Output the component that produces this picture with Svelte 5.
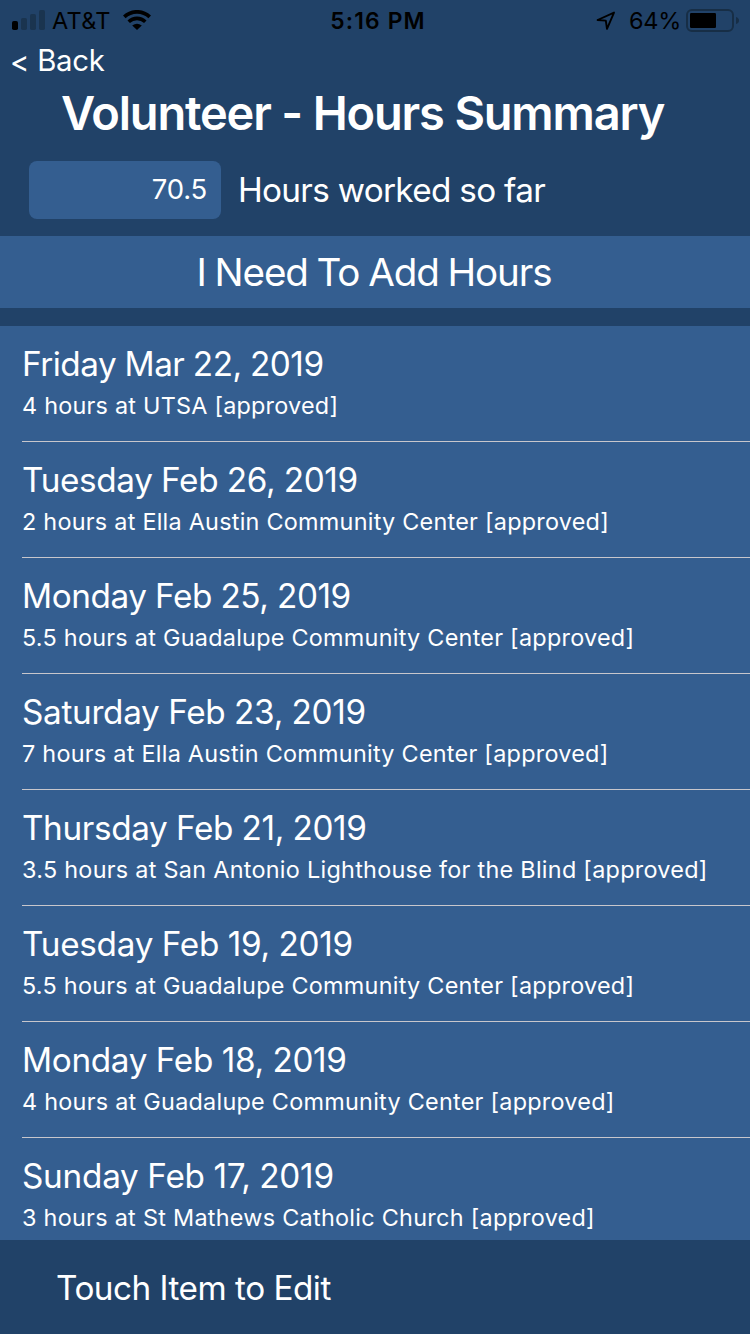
<script>
  // tracking: letter spacing in px for the date line and the detail line
  const entries = [
    { date: 'Friday Mar 22, 2019', detail: '4 hours at UTSA [approved]', tracking: [-0.5, 0.23] },
    { date: 'Tuesday Feb 26, 2019', detail: '2 hours at Ella Austin Community Center [approved]', tracking: [-0.36, 0.25] },
    { date: 'Monday Feb 25, 2019', detail: '5.5 hours at Guadalupe Community Center [approved]', tracking: [-0.42, 0.26] },
    { date: 'Saturday Feb 23, 2019', detail: '7 hours at Ella Austin Community Center [approved]', tracking: [-0.3, 0.26] },
    { date: 'Thursday Feb 21, 2019', detail: '3.5 hours at San Antonio Lighthouse for the Blind [approved]', tracking: [-0.37, 0.28] },
    { date: 'Tuesday Feb 19, 2019', detail: '5.5 hours at Guadalupe Community Center [approved]', tracking: [-0.28, 0.26] },
    { date: 'Monday Feb 18, 2019', detail: '4 hours at Guadalupe Community Center [approved]', tracking: [-0.31, 0.26] },
    { date: 'Sunday Feb 17, 2019', detail: '3 hours at St Mathews Catholic Church [approved]', tracking: [-0.24, 0.28] }
  ];
</script>

<div class="screen">
  <header class="status">
    <div class="left">
      <svg class="signal" width="34" height="20" viewBox="0 0 34 20">
        <rect x="0" y="11" width="6" height="9" rx="1.8" fill="#000" />
        <rect x="9" y="8" width="6" height="12" rx="1.8" fill="#1a344f" />
        <rect x="18" y="4" width="6" height="16" rx="1.8" fill="#1a344f" />
        <rect x="27" y="0" width="6" height="20" rx="1.8" fill="#1a344f" />
      </svg>
      <span class="carrier">AT&amp;T</span>
      <svg class="wifi" width="28" height="20" viewBox="0 0 28 20">
        <path d="M1.3 6.9 C8.4 0.1 19.6 0.1 26.7 6.9" fill="none" stroke="#000" stroke-width="3.7" />
        <path d="M5.7 11.7 C10.4 7.3 17.6 7.3 22.3 11.7" fill="none" stroke="#000" stroke-width="3.6" />
        <path d="M9.2 15.6 Q14 11.9 18.8 15.6 L14 20 Z" fill="#000" />
      </svg>
    </div>
    <span class="time">5:16 PM</span>
    <div class="right">
      <svg class="arrow" width="20" height="20" viewBox="0 0 20 20">
        <path d="M1.6 9 L18 1.6 L11 17.8 L9.8 9.6 Z" fill="none" stroke="#000" stroke-width="1.9" stroke-linejoin="round" />
      </svg>
      <span class="percent">64%</span>
      <svg class="battery" width="54" height="24" viewBox="0 0 54 24">
        <rect x="1" y="1" width="46" height="21" rx="5" fill="none" stroke="#172e46" stroke-width="2" />
        <rect x="4" y="4" width="26" height="15" rx="1.2" fill="#000" />
        <path d="M50 8 Q53 9 53 11.5 Q53 14 50 15 Z" fill="#172e46" />
      </svg>
    </div>
  </header>

  <nav><a class="back" href="#back"><span class="chevron">&lt;</span> Back</a></nav>
  <h1>Volunteer - Hours Summary</h1>
  <div class="total">
    <div class="field">70.5</div>
    <span class="label">Hours worked so far</span>
  </div>
  <button>I Need To Add Hours</button>

  <ul>
    {#each entries as { date, detail, tracking }}
      <li>
        <div class="date" style:letter-spacing="{tracking[0]}px">{date}</div>
        <div class="detail" style:letter-spacing="{tracking[1]}px">{detail}</div>
      </li>
    {/each}
  </ul>

  <footer>Touch Item to Edit</footer>
</div>

<style>
  :global(body) { margin: 0; background: #214268; }
  .screen {
    width: 750px;
    height: 1334px;
    display: flex;
    flex-direction: column;
    overflow: hidden;
    background: #214268;
    color: #fff;
    font-family: Inter, 'Liberation Sans', sans-serif;
    white-space: nowrap;
  }
  .status {
    display: grid;
    grid-template-columns: 1fr auto 1fr;
    height: 40px;
    flex: none;
    color: #000;
    font-size: 23.5px;
    line-height: 41px;
  }
  .left, .right { display: flex; align-items: flex-start; }
  .left { padding-left: 12px; }
  .right { justify-content: flex-end; padding-right: 10px; }
  .signal { margin-top: 10px; }
  .carrier { margin-left: 6px; width: 59px; letter-spacing: 0.3px; }
  .wifi { margin: 10px 0 0 12px; }
  .time {
    padding-left: 6px;
    font-weight: 600;
    font-size: 22.8px;
    line-height: 42px;
    letter-spacing: 1.15px;
  }
  .arrow { margin-top: 11px; margin-right: 13px; }
  .percent { width: 50px; margin-right: 7px; letter-spacing: -0.2px; }
  .battery { margin-top: 9px; }
  nav { height: 43px; flex: none; padding-left: 10px; }
  .back {
    color: inherit;
    text-decoration: none;
    font-size: 29.3px;
    line-height: 41px;
    letter-spacing: -0.25px;
  }
  .chevron { vertical-align: -1px; line-height: 1; }
  h1 {
    margin: 0;
    padding-left: 61px;
    font-size: 47px;
    line-height: 60px;
    font-weight: 600;
    letter-spacing: -1.18px;
  }
  .total {
    display: flex;
    align-items: center;
    height: 58px;
    margin-top: 18px;
    padding-left: 29px;
    flex: none;
  }
  .field {
    box-sizing: border-box;
    width: 192px;
    height: 58px;
    padding-right: 14px;
    border-radius: 8px;
    background: #345e90;
    text-align: right;
    font-size: 27.5px;
    line-height: 56px;
    letter-spacing: -0.2px;
  }
  .label { margin-left: 17px; font-size: 33.3px; letter-spacing: -0.69px; }
  button {
    height: 72px;
    flex: none;
    margin: 17px 0 18px;
    padding: 0 2px 0 0;
    border: 0;
    background: #345e90;
    color: inherit;
    font: inherit;
    font-size: 38.6px;
    letter-spacing: -1.1px;
    word-spacing: -1px;
  }
  ul {
    flex: 1;
    min-height: 0;
    margin: 0;
    padding: 0 0 0 22px;
    overflow: hidden;
    list-style: none;
    background: #345e90;
  }
  li {
    box-sizing: border-box;
    height: 116px;
    padding-top: 18px;
    border-bottom: 1px solid #c8c7cc;
  }
  .date { font-size: 33.3px; line-height: 40px; word-spacing: -0.4px; }
  .detail { margin-top: 7px; font-size: 23.4px; line-height: 30px; }
  footer {
    height: 94px;
    flex: none;
    padding-left: 56px;
    font-size: 33.3px;
    line-height: 96px;
    letter-spacing: -0.5px;
  }
</style>
